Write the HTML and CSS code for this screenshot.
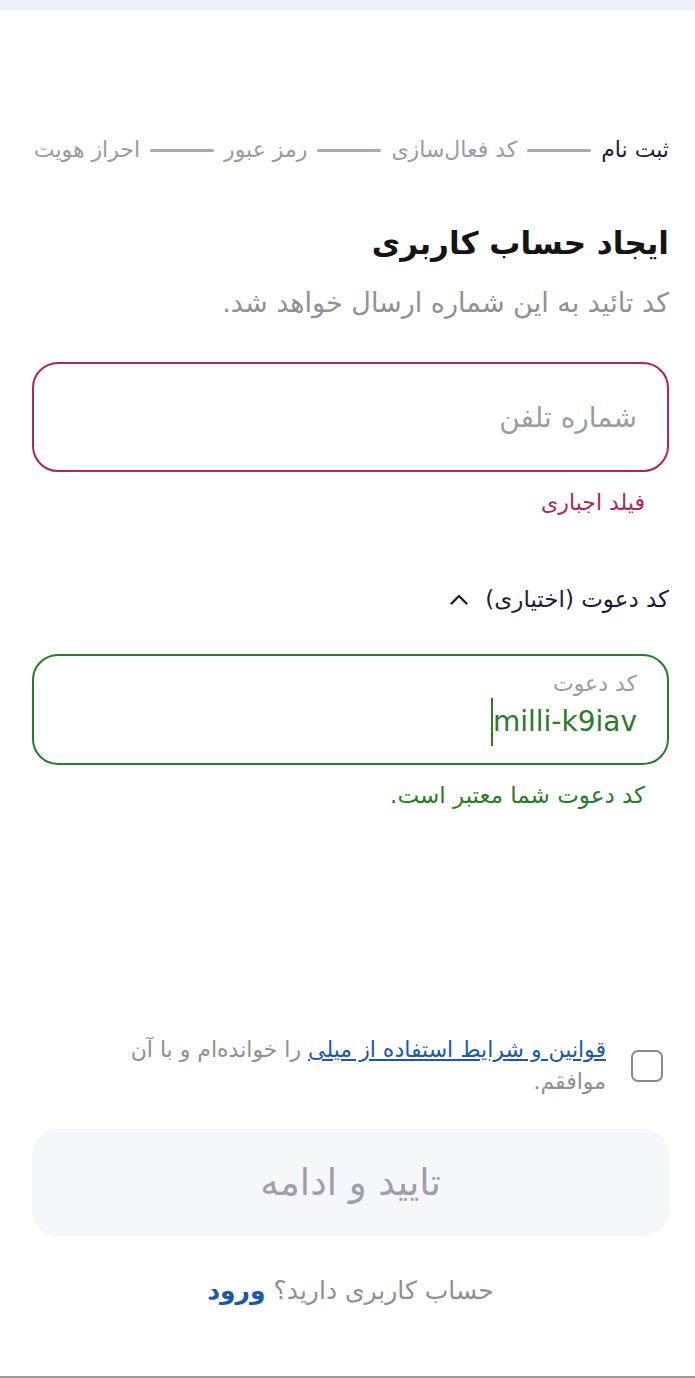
FILE: index.html
```html
<!DOCTYPE html>
<html lang="fa" dir="rtl">
<head>
    <meta charset="UTF-8">
    <meta name="viewport" content="width=device-width, initial-scale=1.0">
    <title>ایجاد حساب کاربری</title>
    <link rel="stylesheet" href="styles.css">
</head>
<body>
    <div class="status-bar"></div>

    <div class="container">
        <div class="steps">
            <span class="step active">ثبت نام</span>
            <span class="step-line"></span>
            <span class="step">کد فعال‌سازی</span>
            <span class="step-line"></span>
            <span class="step">رمز عبور</span>
            <span class="step-line"></span>
            <span class="step">احراز هویت</span>
        </div>

        <h1>ایجاد حساب کاربری</h1>
        <p class="subtitle">کد تائید به این شماره ارسال خواهد شد.</p>

        <div class="field field-error">
            <span class="placeholder">شماره تلفن</span>
        </div>
        <p class="hint hint-error">فیلد اجباری</p>

        <div class="toggle">
            <span>کد دعوت (اختیاری)</span>
            <svg width="20" height="13" viewBox="0 0 20 13"><path d="M2.5 10.5 L10 3 L17.5 10.5" fill="none" stroke="#1d1d2b" stroke-width="2.4" stroke-linecap="round" stroke-linejoin="round"/></svg>
        </div>

        <div class="field field-ok">
            <span class="label">کد دعوت</span>
            <span class="value"><span class="caret"></span><bdi>milli-k9iav</bdi></span>
        </div>
        <p class="hint hint-ok">کد دعوت شما معتبر است.</p>

        <div class="terms">
            <span class="checkbox"></span>
            <p><a href="#">قوانین و شرایط استفاده از میلی</a> <span>را خوانده‌ام و با آن</span> <span>موافقم.</span></p>
        </div>

        <button class="submit" disabled>تایید و ادامه</button>

        <p class="login">حساب کاربری دارید؟ <a href="#">ورود</a></p>
    </div>

    <div class="bottom-line"></div>
</body>
</html>
```

FILE: styles.css
```css
body {
    margin: 0;
    font-family: "DejaVu Sans", "Noto Sans", sans-serif;
    background-color: #fff;
    color: #1d1d2b;
    width: 695px;
    height: 1378px;
    position: relative;
    overflow: hidden;
}
.status-bar {
    height: 10px;
    background-color: #efeff9;
}
.container {
    padding: 125px 26px 0 32px;
}
.steps {
    display: flex;
    align-items: center;
    gap: 10px;
    font-size: 22px;
    line-height: 30px;
    color: #9a9aa6;
}
.step.active {
    color: #1b1b3a;
}
.step-line {
    width: 64px;
    height: 3px;
    border-radius: 2px;
    background-color: #a8a8b8;
}
h1 {
    margin: 56px 0 0;
    font-size: 31px;
    font-weight: bold;
    color: #141414;
    line-height: 44px;
}
.subtitle {
    margin: 20px 0 0;
    font-size: 27px;
    color: #8f8f98;
    line-height: 36px;
}
.field {
    box-sizing: border-box;
    height: 110px;
    border: 2px solid #b3264f;
    border-radius: 26px;
    padding: 0 30px;
    display: flex;
    flex-direction: column;
    justify-content: center;
}
.field-error {
    margin-top: 41px;
}
.placeholder {
    font-size: 28px;
    color: #9c9ca4;
}
.field-ok {
    margin-top: 40px;
    height: 111px;
    border-color: #2b7a2b;
    justify-content: flex-start;
    padding-top: 14px;
}
.label {
    font-size: 22px;
    color: #9c9ca4;
    line-height: 28px;
}
.value {
    font-size: 28px;
    color: #2a7b2a;
    line-height: 40px;
    display: flex;
    align-items: center;
}
.caret {
    width: 2px;
    height: 48px;
    background-color: #2a7b2a;
    order: 2;
}
.value bdi {
    order: 1;
}
.hint {
    margin: 16px 24px 0 0;
    font-size: 22px;
    line-height: 30px;
}
.hint-error {
    color: #b3264f;
}
.hint-ok {
    margin-top: 15px;
    font-size: 23px;
    color: #2a7b2a;
}
.toggle {
    margin-top: 66px;
    display: flex;
    align-items: center;
    gap: 16px;
    font-size: 23px;
    line-height: 30px;
    color: #1b1b3a;
}
.terms {
    margin-top: 224px;
    display: flex;
    align-items: flex-start;
    gap: 25px;
    padding-right: 6px;
}
.checkbox {
    flex: none;
    margin-top: 16px;
    width: 28px;
    height: 28px;
    border: 2px solid #8a8a8a;
    border-radius: 7px;
}
.terms p {
    margin: 0;
    width: 500px;
    font-size: 22px;
    line-height: 32px;
    color: #8f8f98;
}
.terms a {
    color: #1a5aa8;
    text-decoration: underline;
}
.submit {
    display: block;
    width: 100%;
    height: 107px;
    margin-top: 31px;
    border: none;
    border-radius: 26px;
    background-color: #f6f7fa;
    font-family: inherit;
    font-size: 37px;
    color: #9ca0aa;
}
.login {
    margin: 38px 0 0;
    text-align: center;
    font-size: 25px;
    line-height: 34px;
    color: #8f8f98;
}
.login a {
    color: #1a5aa8;
    font-weight: bold;
    text-decoration: none;
}
.bottom-line {
    position: absolute;
    left: 0;
    right: 0;
    bottom: 0;
    height: 2px;
    background-color: #9a9a9a;
}
```
